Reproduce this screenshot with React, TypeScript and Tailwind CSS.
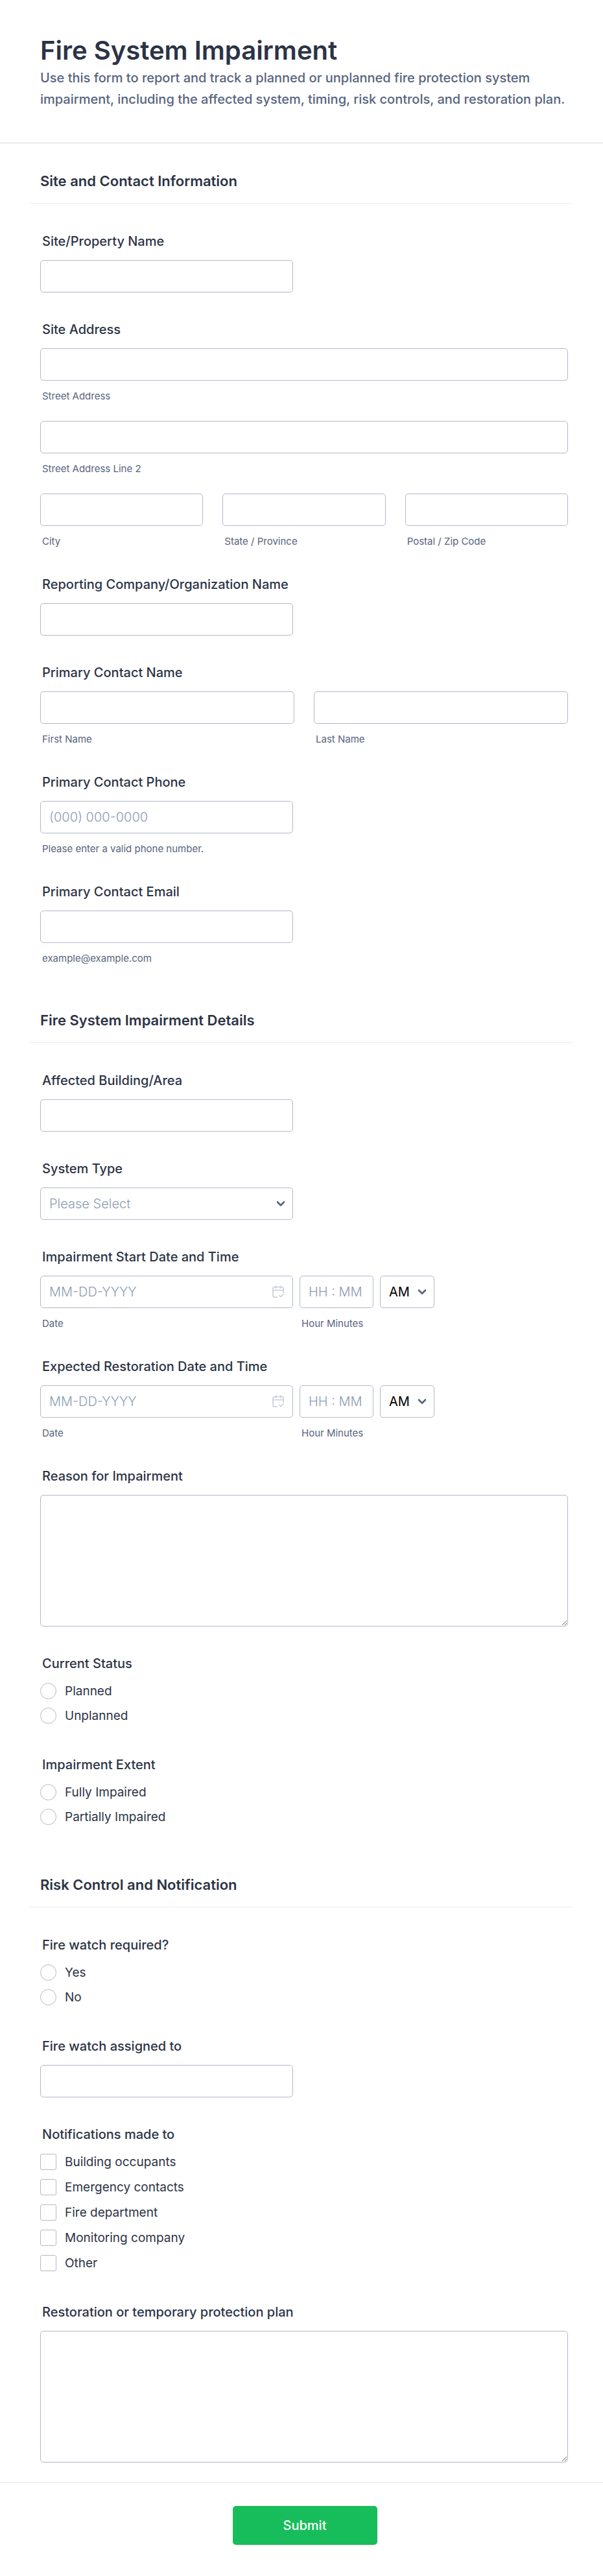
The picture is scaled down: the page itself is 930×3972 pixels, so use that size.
import React, { useId } from "react"

const controlClass =
  "h-[50px] w-full rounded-[5px] border border-[#b3b9ca] bg-white px-[13px] text-[20px] font-light text-[#2c3345] placeholder:text-[#8d9cb5] placeholder:opacity-100 outline-none focus:border-blue-500"

const labelClass = "block pl-[3px] text-[20px] leading-6 font-medium text-[#2c3345]"

function TextInput({
  id,
  sublabel,
  type = "text",
  placeholder,
}: {
  id?: string
  sublabel?: string
  type?: string
  placeholder?: string
}) {
  const ownId = useId()
  const inputId = id || ownId
  return (
    <div className="min-w-0">
      <input id={inputId} type={type} placeholder={placeholder} className={controlClass} />
      {sublabel && <SubLabel htmlFor={inputId}>{sublabel}</SubLabel>}
    </div>
  )
}

function SubLabel({ htmlFor, children }: { htmlFor: string; children: React.ReactNode }) {
  return (
    <label
      htmlFor={htmlFor}
      className="mt-3.5 block pl-[3px] text-[15px] leading-[19px] whitespace-nowrap text-[#57647e]"
    >
      {children}
    </label>
  )
}

// Single input with a label above it
function Field({
  label,
  sublabel,
  type,
  placeholder,
}: {
  label: string
  sublabel?: string
  type?: string
  placeholder?: string
}) {
  const id = useId()
  return (
    <div>
      <label htmlFor={id} className={labelClass}>
        {label}
      </label>
      <div className="mt-[17px] max-w-[390px]">
        <TextInput id={id} type={type} placeholder={placeholder} sublabel={sublabel} />
      </div>
    </div>
  )
}

// Several inputs under one caption
function Group({ label, children }: { label: string; children: React.ReactNode }) {
  return (
    <fieldset>
      <legend className={labelClass}>{label}</legend>
      <div className="mt-[17px]">{children}</div>
    </fieldset>
  )
}

function TextareaField({ label }: { label: string }) {
  const id = useId()
  return (
    <div>
      <label htmlFor={id} className={labelClass}>
        {label}
      </label>
      <textarea
        id={id}
        className="mt-[17px] block h-[203px] w-full resize-y rounded-[5px] border border-[#b3b9ca] bg-white px-[13px] py-2 text-[20px] font-light text-[#2c3345] outline-none focus:border-blue-500"
      />
    </div>
  )
}

function Chevron() {
  return (
    <svg
      viewBox="0 0 14 9"
      className="pointer-events-none absolute top-1/2 right-3 h-[9px] w-3.5 -translate-y-1/2"
      fill="none"
      stroke="#57647e"
      strokeWidth="2.6"
      strokeLinecap="round"
      strokeLinejoin="round"
    >
      <path d="M2 2l5 5 5-5" />
    </svg>
  )
}

function CalendarIcon() {
  return (
    <svg
      viewBox="0 0 18 19"
      className="h-[19px] w-[18px]"
      fill="none"
      stroke="#c8ceda"
      strokeWidth="1.6"
      strokeLinecap="round"
      strokeLinejoin="round"
    >
      <path d="M7.5 18H3.5A2.5 2.5 0 0 1 1 15.5V5a2.5 2.5 0 0 1 2.5-2.5h11A2.5 2.5 0 0 1 17 5v6" />
      <path d="M1 7.5h16M5.5 1v3.5M12.5 1v3.5" />
      <path d="M11 15.5l2 2 4-4" />
    </svg>
  )
}

function DateTimeField({ label }: { label: string }) {
  const dateId = useId()
  const timeId = useId()
  return (
    <Group label={label}>
      <div className="flex flex-wrap items-start gap-2.5">
        <div className="w-[390px] max-w-full">
          <div className="relative">
            <input id={dateId} type="text" placeholder="MM-DD-YYYY" className={controlClass} />
            <button type="button" aria-label="Pick a date" className="absolute top-[15px] right-3.5">
              <CalendarIcon />
            </button>
          </div>
          <SubLabel htmlFor={dateId}>Date</SubLabel>
        </div>
        <div className="w-[114px]">
          <input id={timeId} type="text" placeholder="HH : MM" className={controlClass} />
          <SubLabel htmlFor={timeId}>Hour Minutes</SubLabel>
        </div>
        <div className="relative w-[84px]">
          <select
            aria-label="AM/PM"
            className="h-[50px] w-full appearance-none rounded-[5px] border border-[#b3b9ca] bg-white pl-[13px] text-[20px] text-black outline-none"
          >
            <option>AM</option>
            <option>PM</option>
          </select>
          <Chevron />
        </div>
      </div>
    </Group>
  )
}

function Choices({
  label,
  name,
  type,
  options,
}: {
  label: string
  name: string
  type: "radio" | "checkbox"
  options: string[]
}) {
  const shape =
    type === "radio"
      ? "rounded-full checked:border-8 checked:border-blue-600"
      : "rounded-[3px] checked:border-blue-600 checked:bg-blue-600"
  const spacing = type === "radio" ? "gap-[13px]" : "gap-3.5"
  return (
    <fieldset className="pb-1.5">
      <legend className={labelClass}>{label}</legend>
      <div className={`mt-[18px] flex flex-col items-start ${spacing}`}>
        {options.map((option) => (
          <label key={option} className="flex items-center gap-[13px] text-[19px] leading-[25px] text-[#2c3345]">
            <input
              type={type}
              name={name}
              value={option}
              className={`size-[25px] shrink-0 appearance-none border border-[#b3b9ca] bg-white ${shape}`}
            />
            {option}
          </label>
        ))}
      </div>
    </fieldset>
  )
}

function Section({ title, children }: { title: string; children: React.ReactNode }) {
  return (
    <section>
      <div className="-mr-2 -ml-4 border-b border-[#ebecef] pb-5 pl-4">
        <h2 className="text-[22px] leading-7 font-semibold text-[#2c3345]">{title}</h2>
      </div>
      <div className="mt-[46px] flex flex-col gap-[45px]">{children}</div>
    </section>
  )
}

export default function App() {
  const systemId = useId()

  return (
    <form
      className="min-h-screen bg-white font-['Inter',sans-serif] text-[#2c3345]"
      onSubmit={(e) => e.preventDefault()}
    >
      <header className="border-b border-[#d7d8e1] pt-[52px] pr-[54px] pb-[50px] pl-[62px]">
        <h1 className="text-[40px] leading-[52px] font-semibold">Fire System Impairment</h1>
        <p className="text-[20px] leading-[33px] font-medium text-[#57647e]">
          Use this form to report and track a planned or unplanned fire protection system impairment, including the
          affected system, timing, risk controls, and restoration plan.
        </p>
      </header>

      <main className="flex flex-col gap-[72px] pt-11 pr-[54px] pb-[30px] pl-[62px]">
        <Section title="Site and Contact Information">
          <Field label="Site/Property Name" />
          <Group label="Site Address">
            <div className="flex flex-col gap-[29px]">
              <TextInput sublabel="Street Address" />
              <TextInput sublabel="Street Address Line 2" />
              <div className="grid grid-cols-3 gap-[30px]">
                <TextInput sublabel="City" />
                <TextInput sublabel="State / Province" />
                <TextInput sublabel="Postal / Zip Code" />
              </div>
            </div>
          </Group>
          <Field label="Reporting Company/Organization Name" />
          <Group label="Primary Contact Name">
            <div className="grid grid-cols-2 gap-[30px]">
              <TextInput sublabel="First Name" />
              <TextInput sublabel="Last Name" />
            </div>
          </Group>
          <Field
            label="Primary Contact Phone"
            type="tel"
            placeholder="(000) 000-0000"
            sublabel="Please enter a valid phone number."
          />
          <Field label="Primary Contact Email" type="email" sublabel="example@example.com" />
        </Section>

        <Section title="Fire System Impairment Details">
          <Field label="Affected Building/Area" />
          <div>
            <label htmlFor={systemId} className={labelClass}>
              System Type
            </label>
            <div className="relative mt-[17px] max-w-[390px]">
              <select
                id={systemId}
                defaultValue=""
                className="h-[50px] w-full appearance-none rounded-[5px] border border-[#b3b9ca] bg-white px-[13px] text-[20px] font-light text-[#8d9cb5] outline-none"
              >
                <option value="">Please Select</option>
                <option>Sprinkler System</option>
                <option>Fire Alarm System</option>
                <option>Fire Pump</option>
                <option>Other</option>
              </select>
              <Chevron />
            </div>
          </div>
          <DateTimeField label="Impairment Start Date and Time" />
          <DateTimeField label="Expected Restoration Date and Time" />
          <TextareaField label="Reason for Impairment" />
          <Choices label="Current Status" name="status" type="radio" options={["Planned", "Unplanned"]} />
          <Choices
            label="Impairment Extent"
            name="extent"
            type="radio"
            options={["Fully Impaired", "Partially Impaired"]}
          />
        </Section>

        <Section title="Risk Control and Notification">
          <Choices label="Fire watch required?" name="fireWatch" type="radio" options={["Yes", "No"]} />
          <Field label="Fire watch assigned to" />
          <Choices
            label="Notifications made to"
            name="notifications"
            type="checkbox"
            options={[
              "Building occupants",
              "Emergency contacts",
              "Fire department",
              "Monitoring company",
              "Other",
            ]}
          />
          <TextareaField label="Restoration or temporary protection plan" />
        </Section>
      </main>

      <footer className="flex justify-center border-t border-[#e6e8ee] pt-9 pb-11 pl-2.5">
        <button
          type="submit"
          className="h-[60px] w-[223px] rounded-[5px] bg-[#18bd5b] text-[20px] font-medium text-white hover:bg-[#16aa52]"
        >
          Submit
        </button>
      </footer>
    </form>
  )
}
